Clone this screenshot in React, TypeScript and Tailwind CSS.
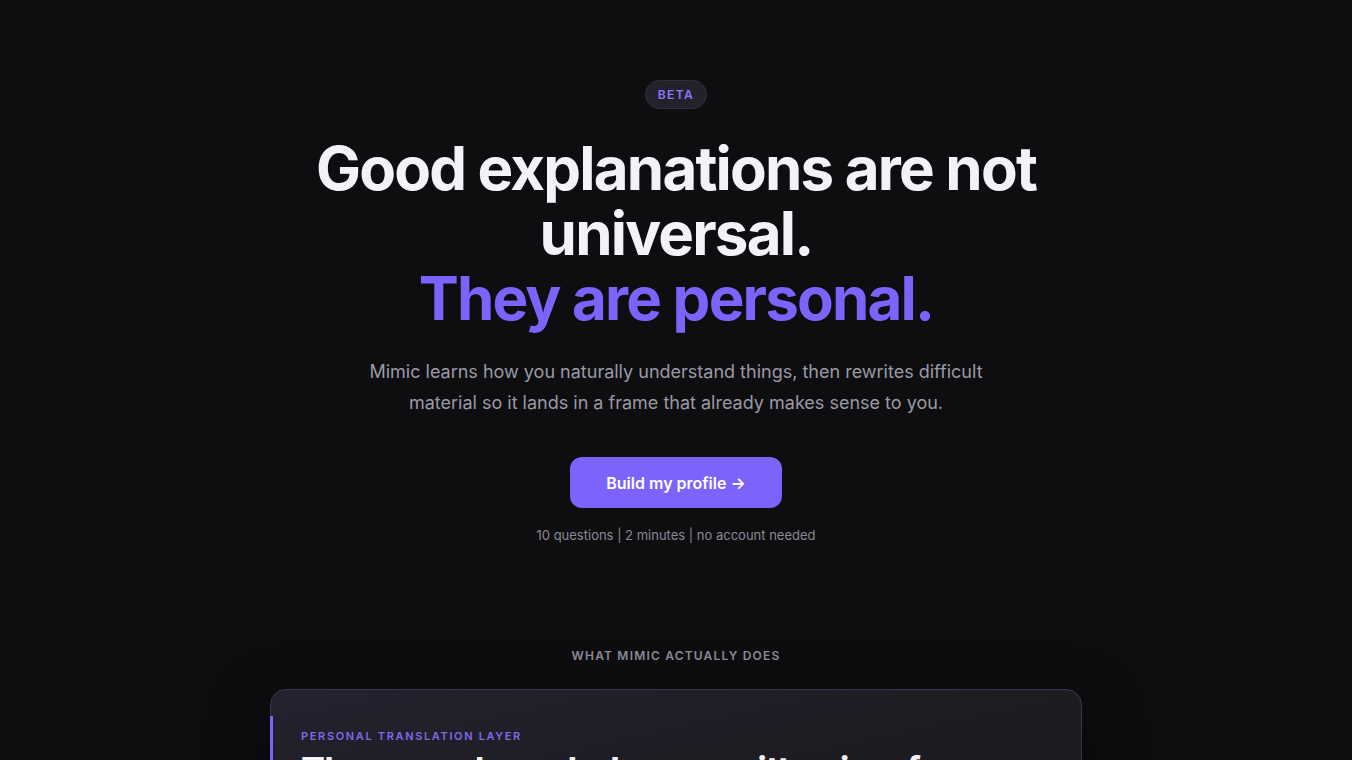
import React from "react";

export default function App() {
  return (
    <div
      className="min-h-screen w-full bg-[#0e0e11] text-white overflow-hidden"
      style={{ fontFamily: "Inter, 'Noto Sans', sans-serif" }}
    >
      <div className="flex flex-col items-center pt-20">
        <div className="flex h-[29px] items-center rounded-full border border-[#34313f] bg-[#23212c] px-[12px] pt-px text-[12px] font-semibold tracking-[0.12em] text-[#8a78f5]">
          BETA
        </div>

        <h1 className="mt-[27px] text-center text-[60px] font-bold leading-[65px] tracking-[-0.03em] text-[#f3f2f7]">
          Good explanations are not
          <br />
          universal.
          <br />
          <span className="text-[#7b63fb]">They are personal.</span>
        </h1>

        <p className="mt-[25px] max-w-[640px] text-center text-[18px] leading-[31px] text-[#9b99a6]">
          Mimic learns how you naturally understand things, then rewrites difficult
          <br />
          material so it lands in a frame that already makes sense to you.
        </p>

        <button className="mt-[39px] flex h-[51px] w-[212px] items-center justify-center rounded-[12px] bg-[#7b63fb] text-[16px] font-semibold text-white">
          Build my profile →
        </button>

        <div className="mt-[17px] text-[13px] leading-[20px] text-[#8b8995]">
          10 questions | 2 minutes | no account needed
        </div>

        <div className="mt-[103px] text-[12px] font-semibold leading-[16px] tracking-[0.1em] text-[#8e8c98]">
          WHAT MIMIC ACTUALLY DOES
        </div>

        <div className="relative mt-[25px] w-[812px] rounded-[16px] border border-[#3a3454] bg-gradient-to-br from-[#24222f] via-[#1d1c22] to-[#1b1a1f] pt-[26px] shadow-[0_20px_60px_rgba(0,0,0,0.5)]">
          <div className="-ml-px border-l-[3px] border-[#7b63fb] pl-[28px] pt-[12px] pb-8">
            <div className="text-[11px] font-semibold leading-[16px] tracking-[0.15em] text-[#7d6ae8]">
              PERSONAL TRANSLATION LAYER
            </div>
            <h2 className="mt-[4px] text-[36px] font-bold leading-[44px] tracking-[-0.02em] text-[#f3f2f7]">
              The same knowledge, rewritten in a frame you already use.
            </h2>
          </div>
        </div>
      </div>
    </div>
  );
}
